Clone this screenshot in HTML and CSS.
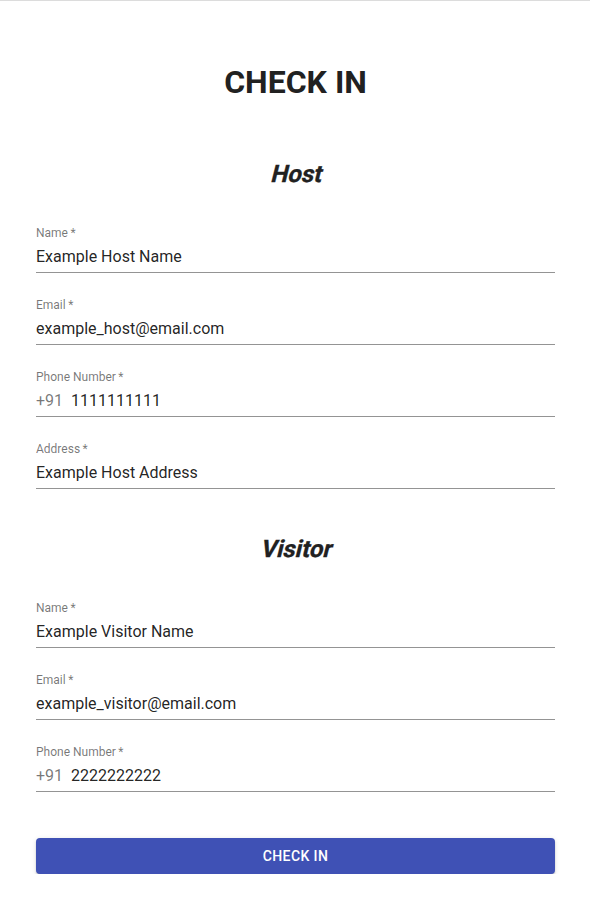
FILE: index.html
```html
<!DOCTYPE html>
<html>
<head>
<meta charset="utf-8">
<link rel="stylesheet" href="styles.css">
</head>
<body>
<div class="page">
  <form class="form">
    <h1 class="title">CHECK IN</h1>

    <h2 class="section"><span class="oblique">Host</span></h2>
    <div class="field">
      <label class="label">Name&thinsp;*</label>
      <div class="input"><span class="value">Example Host Name</span></div>
    </div>
    <div class="field">
      <label class="label">Email&thinsp;*</label>
      <div class="input"><span class="value">example_host@email.com</span></div>
    </div>
    <div class="field">
      <label class="label">Phone Number&thinsp;*</label>
      <div class="input"><span class="adorn">+91</span><span class="value">1111111111</span></div>
    </div>
    <div class="field">
      <label class="label">Address&thinsp;*</label>
      <div class="input"><span class="value">Example Host Address</span></div>
    </div>

    <h2 class="section section-second"><span class="oblique">Visitor</span></h2>
    <div class="field">
      <label class="label">Name&thinsp;*</label>
      <div class="input"><span class="value">Example Visitor Name</span></div>
    </div>
    <div class="field">
      <label class="label">Email&thinsp;*</label>
      <div class="input"><span class="value">example_visitor@email.com</span></div>
    </div>
    <div class="field">
      <label class="label">Phone Number&thinsp;*</label>
      <div class="input"><span class="adorn">+91</span><span class="value">2222222222</span></div>
    </div>

    <button type="button" class="button">Check In</button>
  </form>
</div>
</body>
</html>
```
FILE: styles.css
```css
html, body {
  margin: 0;
  padding: 0;
  background: #fff;
}
body {
  font-family: Roboto, "Liberation Sans", sans-serif;
  color: rgba(0, 0, 0, 0.87);
}
.page {
  border-top: 1px solid #dcdcdc;
  padding: 0 35px 0 36px;
}
.form {
  display: flex;
  flex-direction: column;
}
.title {
  margin: 62px 0 0;
  font-size: 32px;
  line-height: 38px;
  font-weight: 700;
  text-align: center;
  color: #212121;
}
.section {
  margin: 59px 0 21px;
  font-family: Roboto, "Liberation Sans", sans-serif;
  font-size: 24px;
  line-height: 28px;
  font-weight: 700;
  font-style: normal;
  text-align: center;
  color: #212121;
}
.oblique {
  display: inline-block;
  transform: skewX(-14deg);
  transform-origin: 50% 22px;
  -webkit-text-stroke: 0.3px #212121;
}
.section-second {
  margin-top: 38px;
}
.field {
  position: relative;
  margin: 16px 0 8px;
  display: flex;
  flex-direction: column;
}
.label {
  font-size: 12px;
  line-height: 16px;
  color: rgba(0, 0, 0, 0.54);
  height: 16px;
  display: flex;
  align-items: center;
}
.input {
  height: 32px;
  box-sizing: border-box;
  padding: 6px 0 7px;
  font-size: 16px;
  line-height: 19px;
  border-bottom: 1px solid rgba(0, 0, 0, 0.42);
  display: flex;
  align-items: center;
}
.adorn {
  color: rgba(0, 0, 0, 0.54);
  margin-right: 8px;
}
.value {
  color: rgba(0, 0, 0, 0.87);
}
.button {
  margin-top: 38px;
  height: 36px;
  border: none;
  border-radius: 4px;
  background: #3f51b5;
  color: #fff;
  font-family: Roboto, "Liberation Sans", sans-serif;
  font-size: 14px;
  font-weight: 500;
  letter-spacing: 0.4px;
  text-transform: uppercase;
  box-shadow: 0 3px 1px -2px rgba(0,0,0,0.2), 0 2px 2px 0 rgba(0,0,0,0.14), 0 1px 5px 0 rgba(0,0,0,0.12);
  padding: 0;
}
```
